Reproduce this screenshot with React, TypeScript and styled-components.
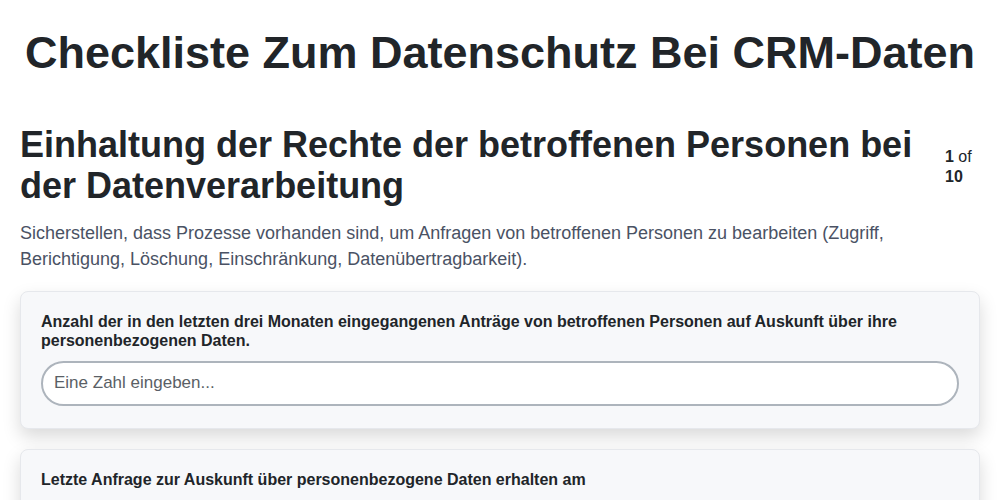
import React from 'react';
import styled, { createGlobalStyle } from 'styled-components';

const GlobalStyle = createGlobalStyle`
  * {
    box-sizing: border-box;
  }

  body {
    margin: 0;
    background: #ffffff;
    color: #212529;
    font-family: "Liberation Sans", Arial, sans-serif;
  }
`;

const questions = [
  {
    label:
      'Anzahl der in den letzten drei Monaten eingegangenen Anträge von betroffenen Personen auf Auskunft über ihre personenbezogenen Daten.',
    placeholder: 'Eine Zahl eingeben...',
  },
  {
    label: 'Letzte Anfrage zur Auskunft über personenbezogene Daten erhalten am',
    placeholder: 'TT.MM.JJJJ',
  },
];

export default function App() {
  return (
    <>
      <GlobalStyle />
      <Page>
        <Title>Checkliste Zum Datenschutz Bei CRM-Daten</Title>

        <SectionHeader>
          <SectionTitle>Einhaltung der Rechte der betroffenen Personen bei der Datenverarbeitung</SectionTitle>
          <Counter>
            <strong>1</strong> of <strong>10</strong>
          </Counter>
        </SectionHeader>

        <Description>
          Sicherstellen, dass Prozesse vorhanden sind, um Anfragen von betroffenen Personen zu bearbeiten (Zugriff,
          Berichtigung, Löschung, Einschränkung, Datenübertragbarkeit).
        </Description>

        <QuestionList>
          {questions.map((q) => (
            <Card key={q.label}>
              <Label>{q.label}</Label>
              <Input type="text" placeholder={q.placeholder} />
            </Card>
          ))}
        </QuestionList>
      </Page>
    </>
  );
}

const Page = styled.main`
  padding: 20px 20px 40px;
`;

const Title = styled.h1`
  margin: 6px 0 44px;
  font-size: 45px;
  font-weight: bold;
  line-height: 1.2;
  text-align: center;
  color: #212529;
`;

const SectionHeader = styled.div`
  display: flex;
  align-items: center;
  gap: 24px;
`;

const SectionTitle = styled.h2`
  flex: 1;
  margin: 0;
  font-size: 36px;
  font-weight: bold;
  line-height: 1.15;
  color: #212529;
`;

const Counter = styled.div`
  width: 35px;
  margin-top: 4px;
  font-size: 16px;
  line-height: 20px;
  color: #212529;
`;

const Description = styled.p`
  max-width: 900px;
  margin: 13px 0 19px;
  font-size: 18px;
  line-height: 26px;
  color: #4a5264;
`;

const QuestionList = styled.div`
  display: flex;
  flex-direction: column;
  gap: 20px;
`;

const Card = styled.div`
  padding: 20px 20px 22px;
  background: #f7f8fa;
  border: 1px solid #e6e8ec;
  border-radius: 8px;
  box-shadow: 0 8px 18px rgba(0, 0, 0, 0.15);
`;

const Label = styled.label`
  display: block;
  margin-bottom: 11px;
  font-size: 16px;
  font-weight: bold;
  line-height: 19px;
  color: #212529;
`;

const Input = styled.input`
  display: block;
  width: 100%;
  height: 45px;
  padding: 0 11px;
  border: 2px solid #adb4bc;
  border-radius: 23px;
  background: #ffffff;
  font-family: "Liberation Sans", Arial, sans-serif;
  font-size: 17px;
  color: #212529;
  outline: none;

  &::placeholder {
    color: #5a5f66;
  }
`;
